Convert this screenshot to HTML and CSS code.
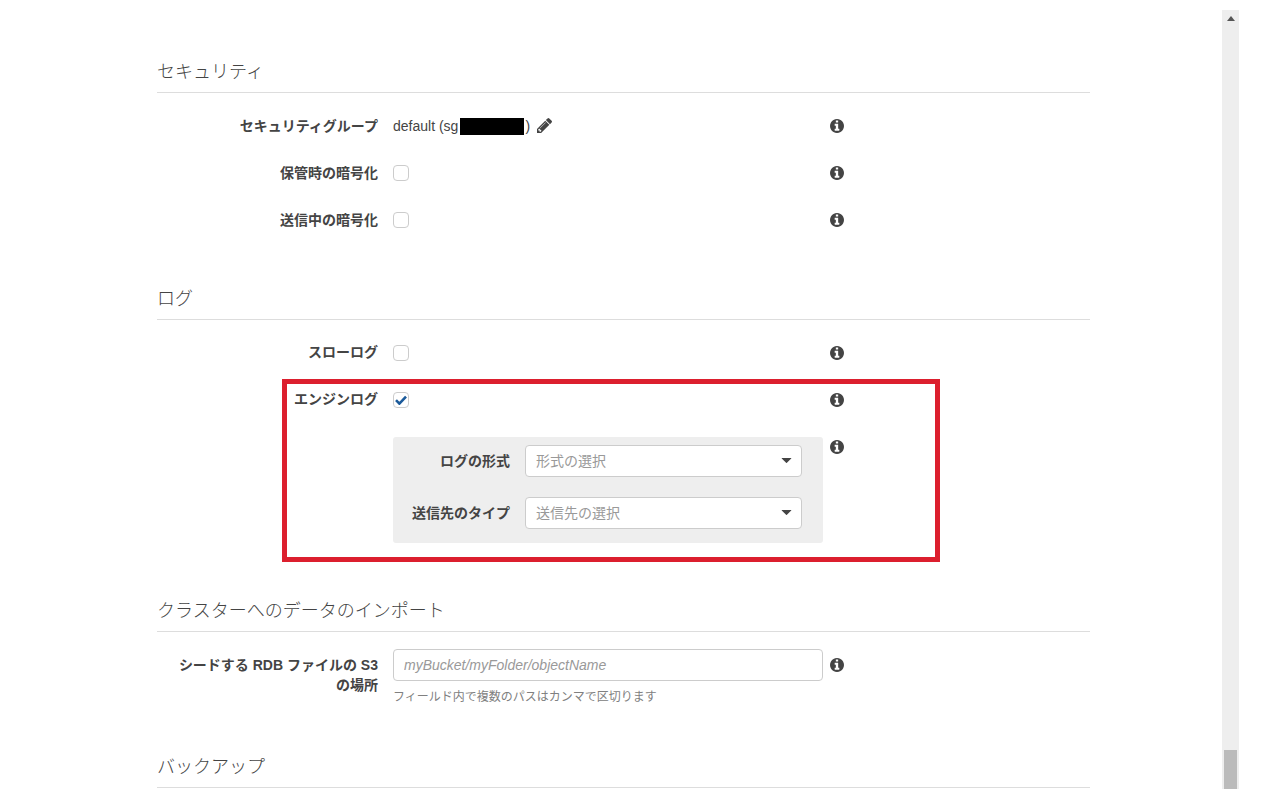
FILE: index.html
```html
<!DOCTYPE html>
<html lang="ja">
<head>
<meta charset="utf-8">
<title>セキュリティ</title>
<link rel="stylesheet" href="styles.css">
</head>
<body>
<svg class="sprite" width="0" height="0" aria-hidden="true">
  <symbol id="info" viewBox="0 128 1536 1536"><path d="M1024 1376v-160q0-14-9-23t-23-9h-96v-512q0-14-9-23t-23-9h-320q-14 0-23 9t-9 23v160q0 14 9 23t23 9h96v320h-96q-14 0-23 9t-9 23v160q0 14 9 23t23 9h448q14 0 23-9t9-23zm-128-896v-160q0-14-9-23t-23-9h-192q-14 0-23 9t-9 23v160q0 14 9 23t23 9h192q14 0 23-9t9-23zm640 416q0 209-103 385.5t-279.5 279.5-385.5 103-385.5-103-279.5-279.5-103-385.5 103-385.5 279.5-279.5 385.5-103 385.5 103 279.5 279.5 103 385.5z"/></symbol>
  <symbol id="caret" viewBox="0 0 12 6"><path d="M0.6 0h10.8q.7 0 .3.6L6.5 5.7q-.5.5-1 0L.3.6Q-.1 0 .6 0z"/></symbol>
</svg>
<div class="page">
  <main class="main">
    <section class="section">
      <h2 class="title">セキュリティ</h2>
      <div class="row">
        <div class="label">セキュリティグループ</div>
        <div class="cell">
          <span class="value">default (sg<span class="redact"></span>)</span>
          <svg class="pencil" viewBox="0 149 1515 1515"><path d="M363 1536l91-91-235-235-91 91v107h128v128h107zm523-928q0-22-22-22-10 0-17 7l-542 542q-7 7-7 17 0 22 22 22 10 0 17-7l542-542q7-7 7-17zm-54-192l416 416-832 832h-416v-416zm683 96q0 53-37 90l-166 166-416-416 166-165q36-38 90-38 53 0 91 38l235 234q37 39 37 91z"/></svg>
        </div>
        <div class="cell"><svg class="info"><use href="#info"/></svg></div>
      </div>
      <div class="row">
        <div class="label">保管時の暗号化</div>
        <div class="cell"><span class="check"></span></div>
        <div class="cell"><svg class="info"><use href="#info"/></svg></div>
      </div>
      <div class="row">
        <div class="label">送信中の暗号化</div>
        <div class="cell"><span class="check"></span></div>
        <div class="cell"><svg class="info"><use href="#info"/></svg></div>
      </div>
    </section>

    <section class="section">
      <h2 class="title">ログ</h2>
      <div class="row">
        <div class="label label-up">スローログ</div>
        <div class="cell"><span class="check"></span></div>
        <div class="cell"><svg class="info"><use href="#info"/></svg></div>
      </div>
      <div class="row">
        <div class="label label-up">エンジンログ</div>
        <div class="cell"><span class="check checked">
          <svg class="tick" viewBox="0 0 12 10"><path d="M1 5.2l3.4 3.4L11 1.6" fill="none" stroke="#1b5a9a" stroke-width="2.6"/></svg>
        </span></div>
        <div class="cell"><svg class="info"><use href="#info"/></svg></div>
      </div>
      <div class="row row-panel">
        <div class="label"></div>
        <div class="panel">
          <div class="panel-row">
            <div class="panel-label">ログの形式</div>
            <div class="select"><span>形式の選択</span><svg class="caret"><use href="#caret"/></svg></div>
          </div>
          <div class="panel-row">
            <div class="panel-label">送信先のタイプ</div>
            <div class="select"><span>送信先の選択</span><svg class="caret"><use href="#caret"/></svg></div>
          </div>
        </div>
        <div class="cell cell-short"><svg class="info"><use href="#info"/></svg></div>
      </div>
    </section>

    <section class="section section-import">
      <h2 class="title">クラスターへのデータのインポート</h2>
      <div class="row">
        <div class="label">シードする RDB ファイルの S3<br>の場所</div>
        <div>
          <input class="input" type="text" placeholder="myBucket/myFolder/objectName">
          <div class="help">フィールド内で複数のパスはカンマで区切ります</div>
        </div>
        <div class="cell"><svg class="info"><use href="#info"/></svg></div>
      </div>
    </section>

    <section class="section section-backup">
      <h2 class="title">バックアップ</h2>
    </section>

    <div class="highlight"></div>
  </main>
  <div class="scrollbar">
    <svg class="scroll-up" viewBox="0 0 8 5"><path d="M4 0l4 5H0z"/></svg>
    <div class="thumb"></div>
  </div>
</div>
</body>
</html>
```
FILE: styles.css
```css
* { box-sizing: border-box; }
html, body { margin: 0; height: 789px; overflow: hidden; background: #fff; }
body {
  font-family: "Liberation Sans", "Noto Sans CJK JP", sans-serif;
  font-size: 14px;
  color: #444;
}
.sprite { position: absolute; }
.page { display: flex; height: 789px; }
.main {
  position: relative;
  width: 1222px;
  padding: 59px 132px 0 157px;
}
.section { margin-bottom: 50px; }
.section-import { margin-top: 55px; margin-bottom: 48px; }
.section-backup { margin: 0; }
.section:nth-child(2) { margin-bottom: 0; }
.title {
  margin: 0 0 17px;
  height: 34px;
  padding-top: 1px;
  border-bottom: 1px solid #ddd;
  font-size: 18px;
  font-weight: 300;
  line-height: 24px;
  color: #444;
}
.row {
  display: grid;
  grid-template-columns: 221px 430px 14px;
  column-gap: 15px;
  margin-bottom: 15px;
}
.row > :last-child { margin-left: -8px; }
.row-panel { margin-top: 21px; margin-bottom: 0; }
.label {
  padding-top: 6px;
  text-align: right;
  font-weight: 700;
  line-height: 20px;
  color: #444;
}
.label-up { padding-top: 5px; }
.cell { display: flex; align-items: center; height: 32px; }
.cell-short { height: 20px; }
.value { line-height: 20px; white-space: nowrap; color: #444; }
.redact {
  display: inline-block;
  width: 64px;
  height: 17px;
  margin: 0 1px 0 2px;
  background: #000;
  vertical-align: -4px;
}
.pencil { width: 15px; height: 15px; margin: 0 0 2px 7px; fill: #444; }
.info { width: 14px; height: 14px; fill: #444; }
.check {
  display: flex;
  align-items: center;
  justify-content: center;
  width: 16px;
  height: 16px;
  background: #fff;
  border: 1px solid #ccc;
  border-radius: 4px;
}
.tick { width: 12px; height: 10px; }
.panel {
  display: flex;
  flex-direction: column;
  gap: 20px;
  height: 106px;
  padding: 8px 21px 14px 0;
  background: #eee;
  border-radius: 3px;
}
.panel-row {
  display: grid;
  grid-template-columns: 117px 277px;
  column-gap: 15px;
  align-items: center;
}
.panel-label { padding-bottom: 2px; text-align: right; font-weight: 700; color: #444; }
.select {
  display: flex;
  align-items: center;
  justify-content: space-between;
  height: 32px;
  padding: 0 9px 2px 10px;
  background: #fff;
  border: 1px solid #ccc;
  border-radius: 4px;
  color: #999;
}
.caret { width: 11px; height: 5px; margin-top: 1px; fill: #444; }
.input {
  display: block;
  width: 430px;
  height: 32px;
  padding: 0 10px;
  border: 1px solid #ccc;
  border-radius: 4px;
  outline: none;
  background: #fff;
  font: 14px "Liberation Sans", "Noto Sans CJK JP", sans-serif;
}
.input::placeholder { color: #999; font-style: italic; opacity: 1; }
.help { margin-top: 7px; font-size: 12px; line-height: 18px; color: #808080; }
.highlight {
  position: absolute;
  left: 282px;
  top: 379px;
  width: 658px;
  height: 183px;
  border: 5px solid #dc1f2e;
  pointer-events: none;
}
.scrollbar {
  display: flex;
  flex-direction: column;
  align-items: center;
  width: 17px;
  height: 779px;
  margin-top: 10px;
  background: #eee;
}
.scroll-up { width: 8px; height: 5px; margin-top: 6px; fill: #555; }
.thumb { width: 13px; height: 39px; margin-top: auto; background: #bbb; }
```
